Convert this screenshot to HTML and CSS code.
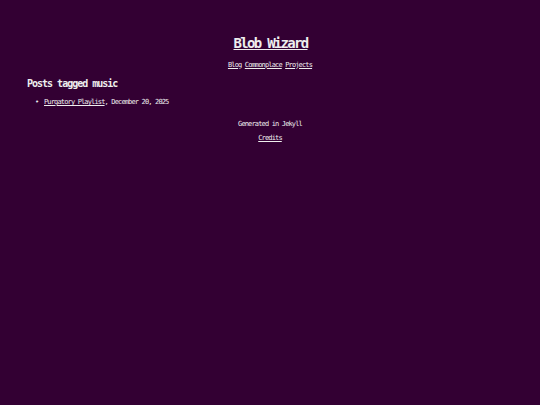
FILE: index.html
```html
<!DOCTYPE html>
<html>
<head>
<meta charset="utf-8">
<link rel="stylesheet" href="styles.css">
</head>
<body>
<div class="page">
  <header class="site-header">
    <h1 class="site-title"><a href="#">Blob Wizard</a></h1>
    <nav class="site-nav"><a href="#">Blog</a> <a href="#">Commonplace</a> <a href="#">Projects</a></nav>
  </header>
  <main class="content">
    <h2 class="tag-title">Posts tagged music</h2>
    <ul class="post-list">
      <li><a href="#">Purgatory Playlist</a>, December 20, 2025</li>
    </ul>
  </main>
  <footer class="site-footer">
    <p class="generated">Generated in Jekyll</p>
    <p class="credits"><a href="#">Credits</a></p>
  </footer>
</div>
</body>
</html>
```

FILE: styles.css
```css
html, body {
  margin: 0;
  padding: 0;
  background: #330033;
}
body {
  color: #eeeeee;
  font-family: "DejaVu Sans Mono", monospace;
  min-height: 405px;
}
a {
  color: #eeeeee;
  text-decoration: underline;
}
.page {
  padding: 35px 27px 0 27px;
}
.site-header {
  text-align: center;
}
.site-title {
  margin: 0;
  font-size: 14px;
  line-height: 16px;
  font-weight: bold;
  letter-spacing: -1.7px;
  padding-left: 1px;
}
.site-nav {
  margin-top: 9.5px;
  font-size: 7px;
  line-height: 9px;
  letter-spacing: -0.85px;
}
.tag-title {
  margin: 8.5px 0 0 0;
  font-size: 10px;
  line-height: 12px;
  font-weight: bold;
  letter-spacing: -1px;
}
.post-list {
  margin: 8px 0 0 0;
  padding-left: 8px;
  list-style: none;
  font-size: 7px;
  line-height: 9px;
  letter-spacing: -0.85px;
}
.post-list li::before {
  content: "\2022";
  display: inline-block;
  width: 9px;
  letter-spacing: 0;
}
.site-footer {
  text-align: center;
  font-size: 7px;
  line-height: 9px;
  letter-spacing: -0.85px;
}
.generated {
  margin: 13px 0 0 0;
}
.credits {
  margin: 5px 0 0 0;
}
```
